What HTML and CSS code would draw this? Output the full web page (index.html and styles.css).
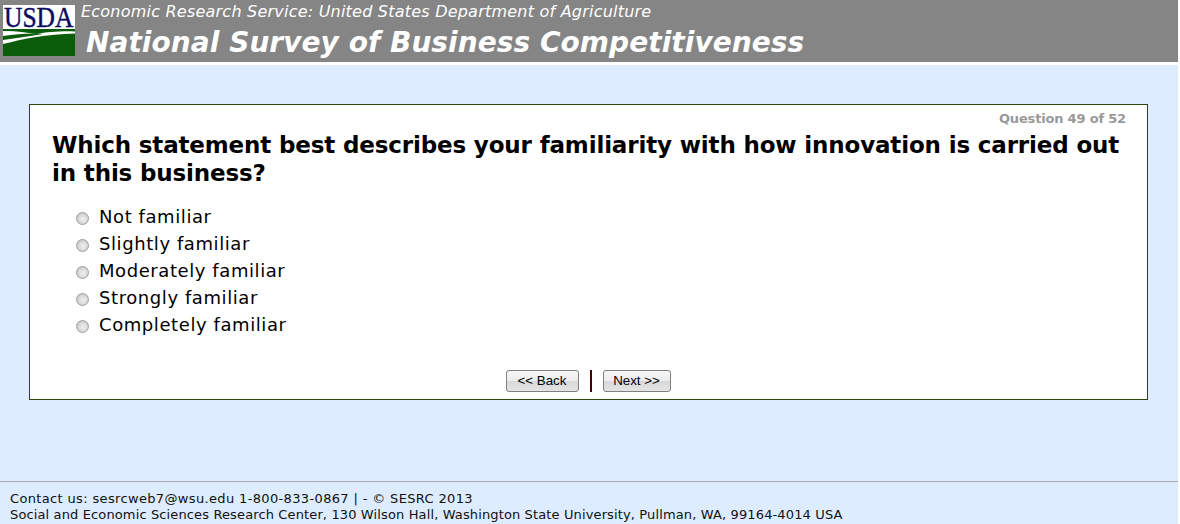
FILE: index.html
```html
<!DOCTYPE html>
<html lang="en">
  <head>
    <meta charset="UTF-8" />
    <title>National Survey of Business Competitiveness</title>
    <link rel="stylesheet" href="styles.css">
  </head>
  <body>
    <div class="page">
      <div class="header">
        <svg class="logo" width="72" height="51" viewBox="0 0 72 51">
          <rect width="72" height="51" fill="#fff" />
          <text class="logo-text" x="1" y="18.6" transform="scale(1 1.18)">USDA</text>
          <path d="M0 24 L72 24 L72 26.5 C58 26 44 27 34 29 C22 27 10 25.5 0 26 Z" fill="#0b5d0b" />
          <path d="M0 31 C14 29 28 28 40 29 C28 31 14 33 0 35 Z" fill="#0b5d0b" />
          <path d="M0 39 C20 34 44 29 72 28.5 L72 51 L0 51 Z" fill="#0b5d0b" />
        </svg>
        <div class="titles">
          <div class="agency">Economic Research Service: United States Department of Agriculture</div>
          <div class="survey">National Survey of Business Competitiveness</div>
        </div>
      </div>

      <div class="content">
        <div class="question-box">
          <div class="progress">Question 49 of 52</div>
          <h1 class="question">Which statement best describes your familiarity with how innovation is carried out in this business?</h1>
          <div class="answers">
            <label class="answer"><input type="radio" name="q49" /><span>Not familiar</span></label>
            <label class="answer"><input type="radio" name="q49" /><span>Slightly familiar</span></label>
            <label class="answer"><input type="radio" name="q49" /><span>Moderately familiar</span></label>
            <label class="answer"><input type="radio" name="q49" /><span>Strongly familiar</span></label>
            <label class="answer"><input type="radio" name="q49" /><span>Completely familiar</span></label>
          </div>
          <div class="nav">
            <button type="button" class="back">&lt;&lt; Back</button>
            <div class="nav-sep"></div>
            <button type="button" class="next">Next &gt;&gt;</button>
          </div>
        </div>
      </div>

      <div class="footer">
        <div class="contact">Contact us: sesrcweb7@wsu.edu 1-800-833-0867 | - &copy; SESRC 2013</div>
        <div class="address">Social and Economic Sciences Research Center, 130 Wilson Hall, Washington State University, Pullman, WA, 99164-4014 USA</div>
      </div>
    </div>
  </body>
</html>
```

FILE: styles.css
```css
* {
  margin: 0;
  padding: 0;
  box-sizing: border-box;
}

body {
  background-color: #fff;
  font-family: "DejaVu Sans", Verdana, sans-serif;
  color: #000;
  overflow: hidden;
}

.page {
  width: 1178px;
  height: 524px;
  display: flex;
  flex-direction: column;
  background-color: #ddecfe;
}

/* Grey banner */
.header {
  height: 65px;
  flex-shrink: 0;
  display: flex;
  gap: 6px;
  padding: 5px 0 0 3px;
  background-color: #858585;
  border-bottom: 3px solid #fff;
}

.logo {
  display: block;
  flex-shrink: 0;
  overflow: visible;
}

.logo-text {
  font-family: "Liberation Serif", serif;
  font-size: 25.5px;
  fill: #0b0b5e;
  stroke: #0b0b5e;
  stroke-width: 0.4px;
}

.titles {
  margin-top: -1px;
}

.agency {
  font-size: 16px;
  font-style: italic;
  letter-spacing: 0.22px;
  line-height: 15px;
  color: #fff;
}

.survey {
  margin: 5px 0 0 5px;
  font-size: 28px;
  font-weight: bold;
  font-style: italic;
  letter-spacing: 0.05px;
  line-height: 38px;
  color: #fff;
}

/* Question */
.content {
  flex: 1;
  padding: 39px 30px 0 29px;
}

.question-box {
  height: 296px;
  padding: 6px 21px 0 22px;
  background-color: #fff;
  border: 1px solid #2f4a00;
}

.progress {
  font-size: 13px;
  font-weight: bold;
  letter-spacing: -0.18px;
  line-height: 15px;
  text-align: right;
  color: #999;
}

.question {
  margin-top: 5px;
  font-size: 23px;
  font-weight: bold;
  letter-spacing: -0.15px;
  line-height: 28px;
}

.answers {
  margin-top: 16px;
  padding-left: 24px;
}

.answer {
  height: 27px;
  display: flex;
  align-items: center;
  gap: 10px;
  font-size: 18px;
  letter-spacing: 0.58px;
}

.answer input {
  appearance: none;
  width: 13px;
  height: 13px;
  margin-top: 3px;
  border: 1px solid #a0a0a0;
  border-radius: 50%;
  background: radial-gradient(circle at 55% 55%, #f0f0f0 0%, #dcdcdc 45%, #b4b4b4 100%);
}

.nav {
  margin-top: 31px;
  display: flex;
  justify-content: center;
  align-items: center;
  gap: 11px;
  padding-right: 2px;
}

button {
  height: 22px;
  font-family: "Liberation Sans", Arial, sans-serif;
  font-size: 13.33px;
  color: #000;
  background: linear-gradient(#f6f6f6 0%, #ececec 50%, #d8d8d8 51%, #e4e4e4 100%);
  border: 1px solid #808080;
  border-radius: 3px;
}

.back {
  width: 73px;
}

.next {
  width: 68px;
}

.nav-sep {
  width: 2px;
  height: 22px;
  margin-top: 1px;
  background-color: #400;
}

/* Footer */
.footer {
  height: 43px;
  flex-shrink: 0;
  padding: 9px 0 0 10px;
  border-top: 1px solid #aaa;
  font-size: 13px;
  line-height: 16px;
  color: #111;
}

.contact {
  letter-spacing: 0.35px;
}

.address {
  letter-spacing: 0.13px;
}
```
